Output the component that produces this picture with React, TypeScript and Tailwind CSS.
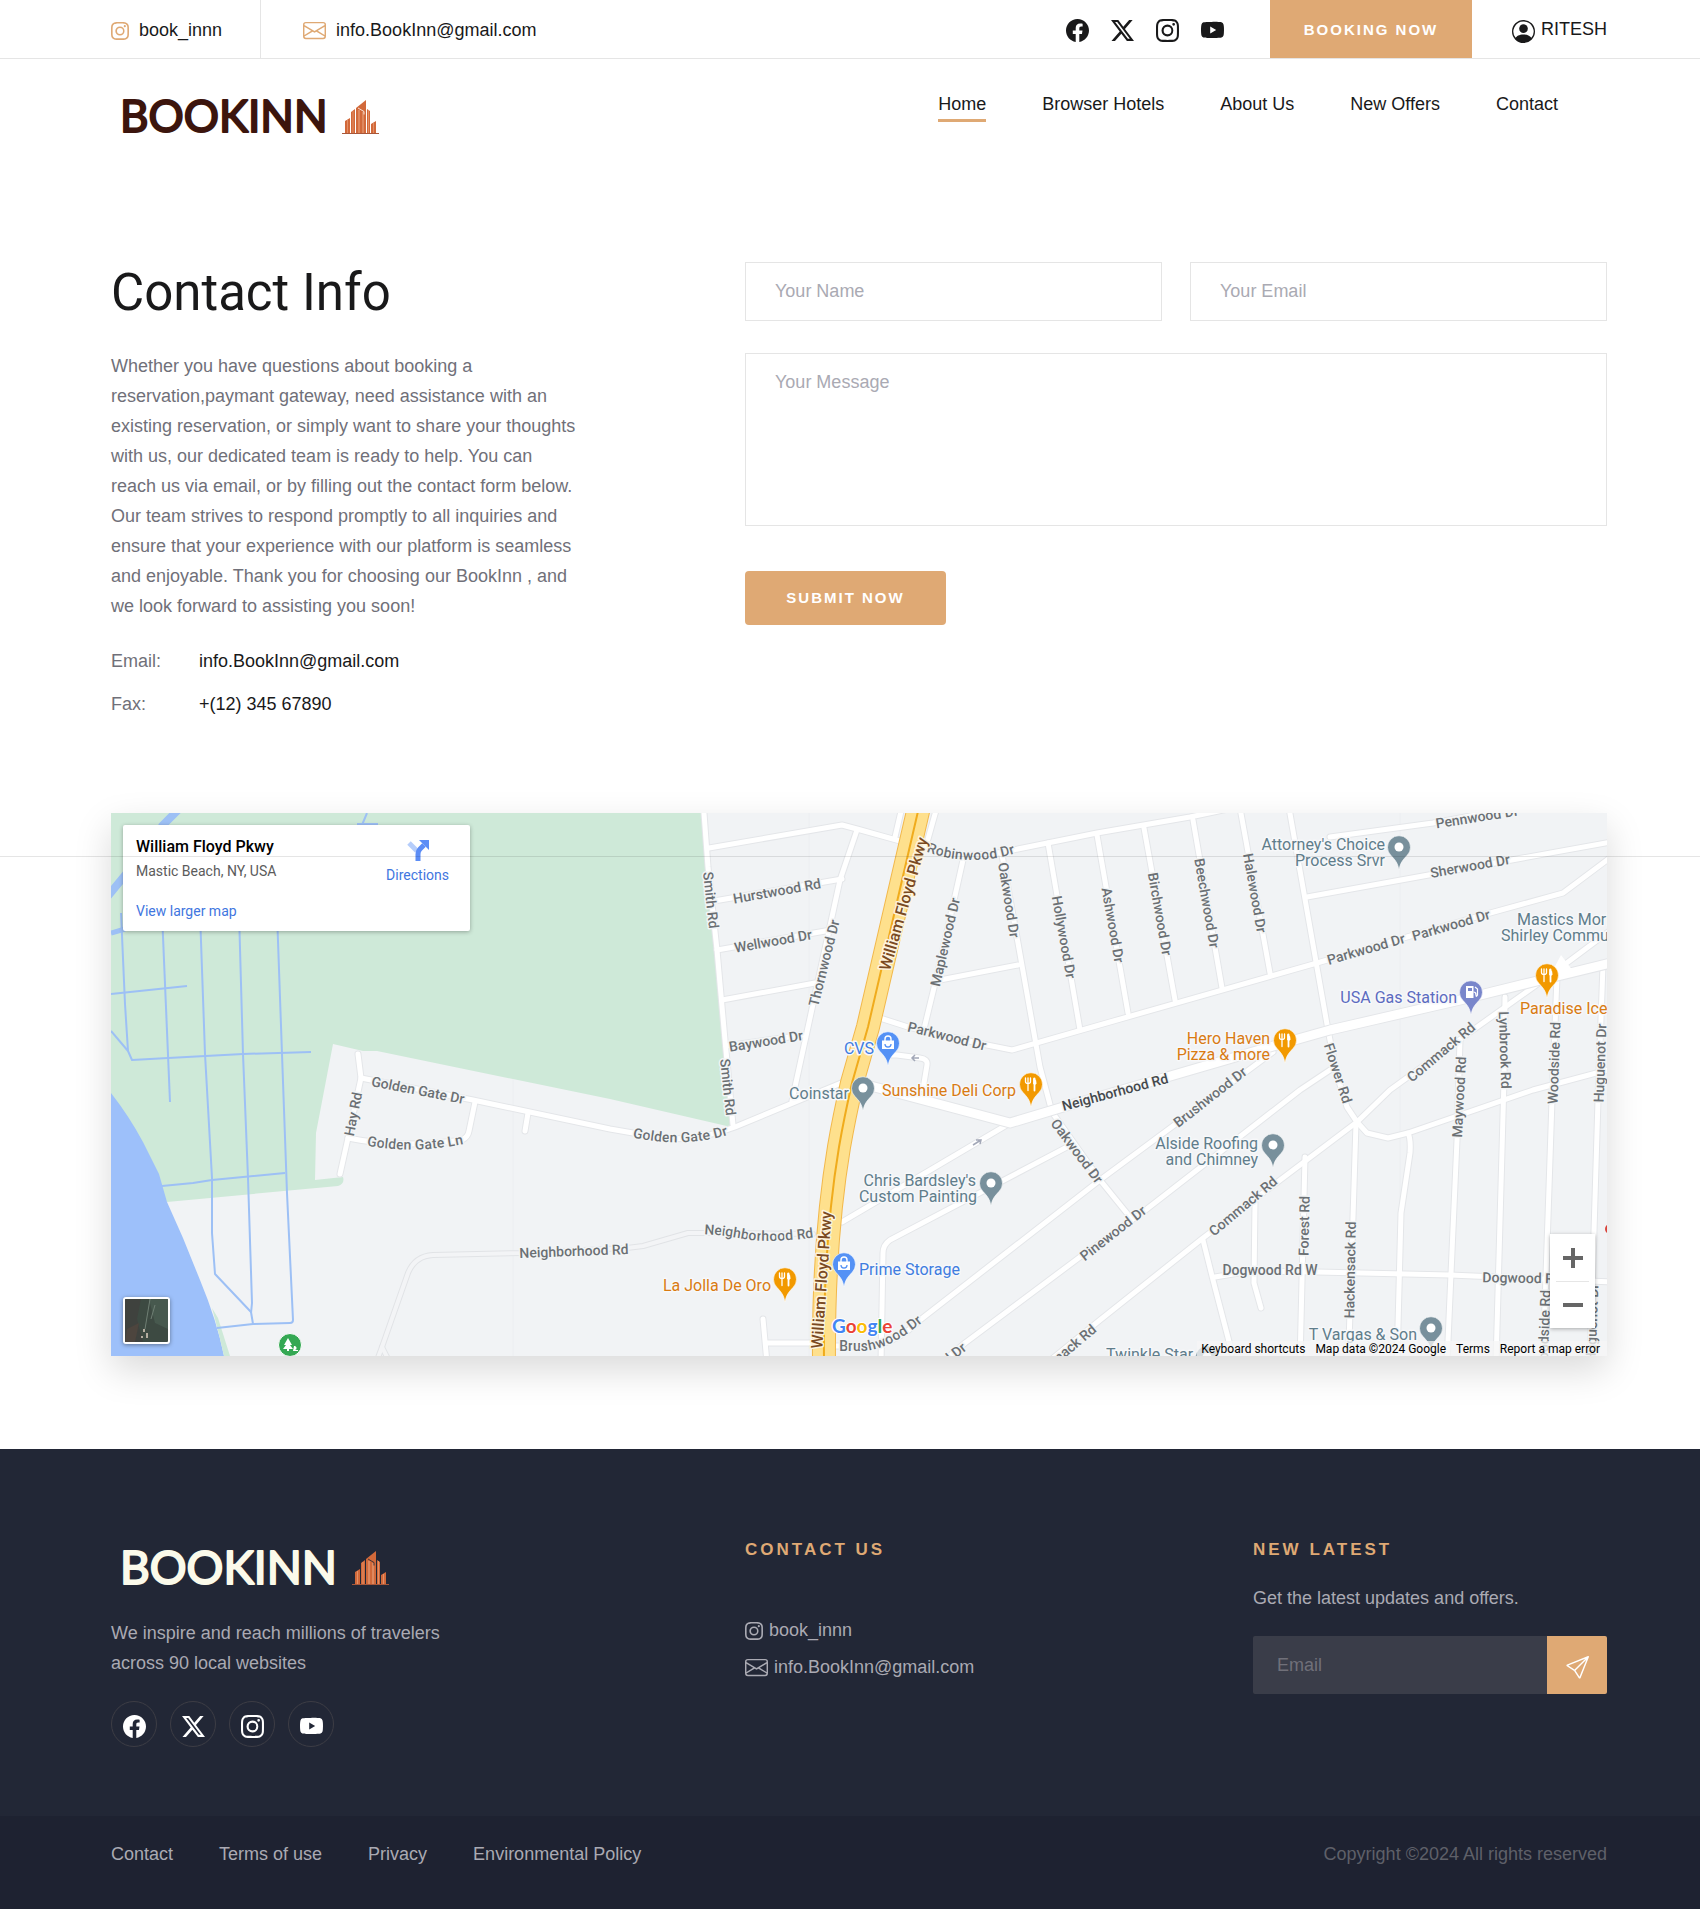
import type { ReactNode } from "react";
import {
  BsEnvelope,
  BsFacebook,
  BsInstagram,
  BsPersonCircle,
  BsSend,
  BsTwitterX,
  BsYoutube,
} from "react-icons/bs";

const socials = [
  { name: "Facebook", Icon: BsFacebook },
  { name: "X", Icon: BsTwitterX },
  { name: "Instagram", Icon: BsInstagram },
  { name: "YouTube", Icon: BsYoutube },
];

const navItems = ["Home", "Browser Hotels", "About Us", "New Offers", "Contact"];
const legalItems = ["Contact", "Terms of use", "Privacy", "Environmental Policy"];

function Buildings({ x, gap }: { x: number; gap: string }) {
  return (
    <g transform={`translate(${x} 1)`}>
      <path d="M3 33V21l5-3v15zM9 33V12l4-3v24zM14 33V8L24 0v33zM25 33V9l3 2v22zM29 33V24l5-3v12z" fill="#d2693a" />
      <path d="M5.500 20v13M11 11v22M26.500 10v23M31.500 23v10" stroke="#e79a72" strokeWidth="0.800" />
      <path d="M17 10v23M21 12v21" stroke="#eba882" strokeWidth="1" />
      <path d="M16 8l6 3.500v3M8.500 16v17M13.500 9v24M24.500 4v29M28.500 20v13" stroke={gap} strokeWidth="0.800" fill="none" />
      <path d="M0 33.500h37" stroke="#a8573a" strokeWidth="1.200" />
    </g>
  );
}

function Logo({ dark }: { dark?: boolean }) {
  const ink = dark ? "#fbfaea" : "#3c150d";
  return (
    <svg
      className={dark ? "block h-[58px] w-[272px]" : "block h-[56px] w-[262px]"}
      viewBox={dark ? "-2 -12 272 58" : "-2 -12 262 56"}
      role="img"
      aria-label="Bookinn"
    >
      <text
        x="-2"
        y={dark ? 34 : 33}
        fontFamily="Lato, sans-serif"
        fontSize={dark ? 46 : 44}
        fontWeight="400"
        fill={ink}
        stroke={ink}
        strokeWidth="2"
        strokeLinejoin="round"
      >
        BOOKINN
      </text>
      <Buildings x={dark ? 230 : 220} gap={dark ? "#222735" : "#ffffff"} />
    </svg>
  );
}

const canals = [
  "M10 100L14 191L17 238L21 247L57 245L132 241L200 239",
  "M0 218L17 238",
  "M51 100L59 289",
  "M0 181L76 173",
  "M89 100L94 241L101 365L101 420L104 461L140 499L142 511",
  "M128 100L132 241L137 365L141 490L140 500",
  "M166 100L171 241L176 380L182 507Q182 510 179 510L142 511L106 515",
  "M51 373L82 370L101 367L174 360",
  "M256 0L251 12M246 11H267",
];

const minorRoads = [
  "M247 241L250 265L237 325L229 361",
  "M250 265L362 287L499 316L522 320Q572 334 624 314L735 268",
  "M237 325Q290 336 351 327Q357 324 358 318L364 289",
  "M417 300L414 318",
  "M593 0L597 54L606 137L614 227L622 312",
  "M598 35L731 12L746 16L789 28",
  "M799 30L817 34Q856 48 902 37L986 20L1079 4L1122 -5",
  "M746 17L729 67L684 274L681 288",
  "M603 88L731 66",
  "M606 137L720 117",
  "M611 187L704 170",
  "M615 233L692 222",
  "M791 -6L784 24",
  "M826 -6L817 26",
  "M852 47L829 150L813 216",
  "M829 167L907 152",
  "M891 42L907 130L929 254L941 299L989 367L1019 404",
  "M937 30L969 217",
  "M986 22L1017 200",
  "M1033 15L1064 187",
  "M1082 7L1111 175",
  "M1129 -5L1159 160",
  "M1178 -5L1217 217L1226 262L1236 294L1246 309L1256 320L1277 325L1297 320L1422 277L1500 256",
  "M769 205L797 214L876 232L901 237L999 209L1206 150L1372 102L1452 80L1500 44",
  "M1219 24L1322 10L1402 -5",
  "M1196 84L1500 29",
  "M1500 117L1449 155L1362 217L1279 277L1246 309L1092 425L989 507L936 550",
  "M1162 239L1066 310L989 367L809 507Q786 530 760 533H722",
  "M1219 257L1189 277L1032 399L969 444L854 530L830 550",
  "M731 409L899 310",
  "M956 334L779 427Q772 432 772 440L770 550",
  "M652 506L656 550M656 530H702",
  "M778 242L786 242L809 245Q817 246 816 252L812 276",
  "M1092 427L1102 467L1121 540",
  "M1194 344L1189 550",
  "M1144 390L1143 470L1150 495",
  "M1245 310L1238 530",
  "M1297 320Q1300 326 1299 340L1290 400L1286 550",
  "M1349 227L1346 327L1336 550",
  "M1394 184L1393 267L1385 550",
  "M1446 164L1441 287L1432 550",
  "M1492 152L1487 287L1479 550",
  "M1104 464L1140 458L1206 459L1339 462L1500 469",
];

const mainRoads = ["M756 272L899 310L949 295L1056 264L1159 234L1219 217L1349 187L1422 169L1500 150"];
const trackRoads = ["M265 550L271 534L297 460Q304 443 322 442L409 440L516 435L532 433L577 420H620L702 421", "M271 534L279 550"];
const parkway = "M808 -6L757 214L741 270Q733 305 728 334Q712 430 713 550";

type RoadLabel = [x: number, y: number, angle: number, text: string];

const roadLabels: RoadLabel[] = [
  [666, 78, -10, "Hurstwood Rd"],
  [662, 128, -10, "Wellwood Dr"],
  [655, 228, -9, "Baywood Dr"],
  [600, 87, 84, "Smith Rd"],
  [617, 274, 84, "Smith Rd"],
  [713, 150, -76, "Thornwood Dr"],
  [834, 129, -77, "Maplewood Dr"],
  [898, 87, 81, "Oakwood Dr"],
  [953, 124, 80, "Hollywood Dr"],
  [1002, 112, 80, "Ashwood Dr"],
  [1049, 101, 80, "Birchwood Dr"],
  [1096, 90, 80, "Beechwood Dr"],
  [1144, 80, 80, "Halewood Dr"],
  [1366, 4, -9, "Pennwood Dr"],
  [1359, 53, -10, "Sherwood Dr"],
  [1255, 136, -16, "Parkwood Dr"],
  [1340, 112, -16, "Parkwood Dr"],
  [836, 223, 14, "Parkwood Dr"],
  [1227, 260, 72, "Flower Rd"],
  [1099, 284, -38, "Brushwood Dr"],
  [1330, 239, -40, "Commack Rd"],
  [1132, 393, -40, "Commack Rd"],
  [951, 541, -40, "Commack Rd"],
  [1002, 420, -38, "Pinewood Dr"],
  [822, 557, -38, "Pinewood Dr"],
  [966, 338, 53, "Oakwood Dr"],
  [1193, 413, -89, "Forest Rd"],
  [1239, 457, -89, "Hackensack Rd"],
  [1348, 284, -87, "Maywood Rd"],
  [1394, 237, 88, "Lynbrook Rd"],
  [1443, 250, -88, "Woodside Rd"],
  [1433, 518, -88, "Woodside Rd"],
  [1489, 250, -88, "Huguenot Dr"],
  [1481, 510, -88, "Huguenot Dr"],
  [1159, 457, 0, "Dogwood Rd W"],
  [1419, 465, 1, "Dogwood Rd W"],
  [307, 277, 11, "Golden Gate Dr"],
  [242, 301, -79, "Hay Rd"],
  [463, 438, -2, "Neighborhood Rd"],
];

const curvedLabels = [
  { id: "robinwood", d: "M812 32Q858 51 908 34", text: "Robinwood Dr" },
  { id: "golden-ln", d: "M252 327Q304 337 356 325", text: "Golden Gate Ln" },
  { id: "golden-dr", d: "M516 318Q574 332 622 315", text: "Golden Gate Dr" },
  { id: "neighborhood", d: "M584 416Q608 416 634 421T712 418", text: "Neighborhood Rd" },
  { id: "brushwood", d: "M724 533L754 533Q780 530 812 502", text: "Brushwood Dr" },
];

type PinKind = "dot" | "bag" | "food" | "gas";
const pinFill: Record<PinKind, string> = { dot: "#78909c", bag: "#5491f5", food: "#f29900", gas: "#7986cb" };

const pins: [x: number, y: number, kind: PinKind][] = [
  [777, 230, "bag"],
  [752, 275, "dot"],
  [920, 271, "food"],
  [880, 370, "dot"],
  [733, 451, "bag"],
  [674, 466, "food"],
  [1288, 34, "dot"],
  [1360, 179, "gas"],
  [1436, 162, "food"],
  [1174, 227, "food"],
  [1162, 332, "dot"],
  [1320, 515, "dot"],
  [1096, 544, "dot"],
];

const places: [x: number, y: number, anchor: "start" | "end", color: string, text: string][] = [
  [763, 236, "end", "#3f7de0", "CVS"],
  [738, 281, "end", "#607d8b", "Coinstar"],
  [905, 278, "end", "#d97b12", "Sunshine Deli Corp"],
  [865, 368, "end", "#607d8b", "Chris Bardsley's"],
  [866, 384, "end", "#607d8b", "Custom Painting"],
  [748, 457, "start", "#3f7de0", "Prime Storage"],
  [660, 473, "end", "#d97b12", "La Jolla De Oro"],
  [1274, 32, "end", "#607d8b", "Attorney's Choice"],
  [1274, 48, "end", "#607d8b", "Process Srvr"],
  [1346, 185, "end", "#5c6bc0", "USA Gas Station"],
  [1406, 107, "start", "#607d8b", "Mastics Moriches"],
  [1390, 123, "start", "#607d8b", "Shirley Community"],
  [1409, 196, "start", "#d97b12", "Paradise Ice"],
  [1159, 226, "end", "#d97b12", "Hero Haven"],
  [1159, 242, "end", "#d97b12", "Pizza & more"],
  [1147, 331, "end", "#607d8b", "Alside Roofing"],
  [1147, 347, "end", "#607d8b", "and Chimney"],
  [1306, 522, "end", "#607d8b", "T Vargas & Son"],
  [995, 542, "start", "#607d8b", "Twinkle Star"],
];

const pinGlyph: Record<PinKind, ReactNode> = {
  dot: <circle r="4.500" fill="#fff" />,
  bag: (
    <g>
      <path d="M-6-2.500H6V6H-6z" fill="#fff" />
      <path d="M-3-2V-4a3 3 0 0 1 6 0V-2" fill="none" stroke="#fff" strokeWidth="1.400" />
      <path d="M-3 1a3 3 0 0 0 6 0" fill="none" stroke="#5491f5" strokeWidth="1.300" />
    </g>
  ),
  food: (
    <g fill="none" stroke="#fff" strokeLinecap="round">
      <path d="M-5.500-6v3.500q0 2 2.500 2t2.500-2V-6M-3-6V6.500" strokeWidth="1.300" />
      <path d="M3.500-5.500v12" strokeWidth="1.800" />
      <path d="M3-5.500q2.500 1 2 5.500H3z" fill="#fff" strokeWidth="1" />
    </g>
  ),
  gas: (
    <g>
      <path d="M-5-6H2.500V6H-5z" fill="#fff" />
      <path d="M-3-4H1v3H-3z" fill="#7986cb" />
      <path d="M2.500 0Q5 0 5 3t1.500 0V-3L4-5" fill="none" stroke="#fff" strokeWidth="1.200" />
    </g>
  ),
};

function Roads({ paths, width, casing, fill }: { paths: string[]; width: number; casing: string; fill: string }) {
  return (
    <g fill="none" strokeLinecap="round" strokeLinejoin="round">
      {paths.map((d) => (
        <path key={`c${d}`} d={d} stroke={casing} strokeWidth={width + 2} />
      ))}
      {paths.map((d) => (
        <path key={`f${d}`} d={d} stroke={fill} strokeWidth={width} />
      ))}
    </g>
  );
}

function StreetMap() {
  return (
    <svg className="block h-[543px] w-full" fontFamily="Roboto, sans-serif" role="img" aria-label="Map of William Floyd Pkwy">
      <rect width="100%" height="100%" fill="#f1f3f5" />
      <path
        d="M0 0H591L597 54L606 137L614 227L620 314L499 286L402 266L266 238H252L222 231L205 320L204 367L232 364Q234 371 227 373L56 389L0 290Z"
        fill="#cee9d8"
      />
      <path d="M0 280Q18 303 32 329L48 361L56 389L72 425L89 467Q106 508 113 543H0Z" fill="#9dc0fa" />
      <path d="M101 495L107 505L119 543H113Q108 520 101 495" fill="#cee9d8" />
      <g fill="none" stroke="#9dc0f5" strokeWidth="2" strokeLinejoin="round">
        {canals.map((d) => (
          <path key={d} d={d} />
        ))}
        <path d="M50 14L68 -4M-3 83L20 55" strokeWidth="8" />
        <path d="M0 120L14 116" strokeWidth="5" />
      </g>
      <path d="M402 266V543M698 0V543M1289 0V543" stroke="#e9ecef" strokeOpacity="0.600" />

      <Roads paths={trackRoads} width={4} casing="#e1e3e6" fill="#f3f4f6" />
      <Roads paths={minorRoads} width={5} casing="#e4e6e9" fill="#ffffff" />
      <Roads paths={mainRoads} width={9} casing="#e4e6e9" fill="#ffffff" />
      <path d="M1440 161L1450 142L1462 158Z" fill="#fff" />
      <path d={parkway} fill="none" stroke="#f2b84b" strokeWidth="24" />
      <path d={parkway} fill="none" stroke="#fee08d" strokeWidth="22" />
      <path d={parkway} fill="none" stroke="#f0ab1c" strokeWidth="2" />
      <path d="M808 245h-7m3-3l-3 3l3 3M862 332l8-5m-5 0h5l-1 4" stroke="#a3a8b8" strokeWidth="1.500" fill="none" />

      <g
        fontSize="14"
        fontWeight="500"
        fill="#6b7074"
        stroke="#f3f5f6"
        strokeWidth="3"
        strokeLinejoin="round"
        textAnchor="middle"
        style={{ paintOrder: "stroke" }}
      >
        {roadLabels.map(([x, y, angle, text]) => (
          <text key={`${text}${x}`} transform={`translate(${x} ${y}) rotate(${angle})`} dy="5">
            {text}
          </text>
        ))}
        {curvedLabels.map(({ id, d, text }) => (
          <g key={id}>
            <path id={id} d={d} fill="none" stroke="none" />
            <text dy="5">
              <textPath href={`#${id}`} startOffset="50%">
                {text}
              </textPath>
            </text>
          </g>
        ))}
        <text transform="translate(1004 279) rotate(-15)" dy="5" fill="#45494d">
          Neighborhood Rd
        </text>
        <g fontSize="16" fill="#7a4a22" stroke="#fdf3dc">
          <text transform="translate(793 91) rotate(-74)" dy="5">
            William Floyd Pkwy
          </text>
          <text transform="translate(711 467) rotate(-86)" dy="5">
            William Floyd Pkwy
          </text>
        </g>
      </g>

      <g fontSize="16" stroke="#f7f8fa" strokeWidth="3" strokeLinejoin="round" style={{ paintOrder: "stroke" }}>
        {places.map(([x, y, anchor, color, text]) => (
          <text key={text} x={x} y={y} dy="5" textAnchor={anchor} fill={color}>
            {text}
          </text>
        ))}
      </g>
      {pins.map(([x, y, kind]) => (
        <g key={`${x}-${y}`} transform={`translate(${x} ${y})`}>
          <path
            d="M0 23C-1.500 15-4 13-8 8.500A11.500 11.500 0 1 1 8 8.500C4 13 1.500 15 0 23Z"
            fill={pinFill[kind]}
            stroke="#fff"
            strokeWidth="0.600"
          />
          {pinGlyph[kind]}
        </g>
      ))}
      <g transform="translate(179 532)">
        <circle r="11.500" fill="#34a853" stroke="#fff" />
        <path d="M-2-7L2 0H0L3 4H-1V6H-3V4H-7L-4 0H-6ZM4 1a2 2 0 0 1 1 4H8V6H3Z" fill="#fff" />
      </g>
      <circle cx="1499" cy="416" r="5" fill="#d9443c" />
      <text
        x="721"
        y="520"
        fontFamily="Lato, sans-serif"
        fontSize="19"
        fontWeight="700"
        stroke="#fff"
        strokeWidth="2"
        strokeLinejoin="round"
        style={{ paintOrder: "stroke" }}
      >
        <tspan fill="#4285f4">G</tspan>
        <tspan fill="#ea4335">o</tspan>
        <tspan fill="#fbbc05">o</tspan>
        <tspan fill="#4285f4">g</tspan>
        <tspan fill="#34a853">l</tspan>
        <tspan fill="#ea4335">e</tspan>
      </text>
    </svg>
  );
}

function MapPanel() {
  return (
    <div className="relative overflow-hidden font-[Roboto,sans-serif] shadow-[0_14px_35px_rgba(0,0,0,0.15)]">
      <StreetMap />
      <div className="absolute top-3 left-3 flex h-[106px] w-[347px] justify-between rounded-xs bg-white pt-3 pr-[21px] pl-[13px] shadow-[0_1px_4px_rgba(0,0,0,0.3)]">
        <div className="flex flex-col">
          <strong className="text-base leading-5 font-medium text-black">William Floyd Pkwy</strong>
          <span className="mt-[6px] text-sm leading-4 text-[#5b5b5b]">Mastic Beach, NY, USA</span>
          <a href="#map" className="mt-6 text-sm leading-4 text-[#3f76e0]">
            View larger map
          </a>
        </div>
        <a href="#directions" className="flex flex-col items-center text-sm leading-4 text-[#3f76e0]">
          <svg className="mt-[2px] mb-[6px] h-[22px] w-[24px]" viewBox="0 0 24 22" aria-hidden="true">
            <path d="M3 4L11 12" stroke="#b5cdfb" strokeWidth="5" fill="none" />
            <path d="M12 22V15Q12 12 14 10L18 6" stroke="#5c8df6" strokeWidth="5" fill="none" />
            <path d="M13 1H23V11Z" fill="#5c8df6" />
          </svg>
          Directions
        </a>
      </div>
      <button
        type="button"
        aria-label="Show satellite imagery"
        className="absolute bottom-3 left-3 size-[47px] overflow-hidden rounded-[3px] border-2 border-white bg-[#3d4a42] shadow-[0_1px_4px_rgba(0,0,0,0.4)]"
      >
        <svg className="block size-full" viewBox="0 0 43 43" aria-hidden="true">
          <path d="M0 0H16L12 20L18 43H0Z" fill="#3f423e" />
          <path d="M24 0H43V30L30 24Z" fill="#47594e" />
          <path d="M2 30L14 24L10 43H0Z" fill="#4d453e" />
          <path d="M25 0L22 18L20 30M30 6L26 20" stroke="#6f7f74" fill="none" />
          <path d="M18 30h2v3h-2zM21 34h2v5h-2zM16 37h2v2h-2z" fill="#b5ada0" />
        </svg>
      </button>
      <div className="absolute right-3 bottom-7 flex w-[45px] flex-col bg-white shadow-[0_1px_4px_rgba(0,0,0,0.3)]">
        <button type="button" aria-label="Zoom in" className="flex h-[47px] items-center justify-center">
          <svg className="size-5" viewBox="0 0 20 20" aria-hidden="true">
            <path d="M0 10H20M10 0V20" stroke="#666" strokeWidth="4" />
          </svg>
        </button>
        <hr className="mx-[6px] border-[#e6e6e6]" />
        <button type="button" aria-label="Zoom out" className="flex h-[46px] items-center justify-center">
          <svg className="size-5" viewBox="0 0 20 20" aria-hidden="true">
            <path d="M0 10H20" stroke="#666" strokeWidth="4" />
          </svg>
        </button>
      </div>
      <div className="absolute right-0 bottom-0 flex h-[15px] items-center gap-[10px] bg-[#f5f5f5]/75 pr-[7px] pl-1 text-xs leading-4 text-black">
        <button type="button">Keyboard shortcuts</button>
        <span>Map data ©2024 Google</span>
        <a href="#terms">Terms</a>
        <a href="#report">Report a map error</a>
      </div>
    </div>
  );
}

function TopBar() {
  return (
    <div className="flex items-stretch justify-between border-b border-[#e5e5e5] pr-[93px] pl-[111px] leading-[27px]">
      <div className="flex">
        <a href="#instagram" className="flex h-[58px] items-center gap-[10px] border-r border-[#e5e5e5] pt-[3px] pr-[38px]">
          <BsInstagram className="size-[18px] text-[#dfa974]" />
          book_innn
        </a>
        <a href="mailto:info.BookInn@gmail.com" className="flex items-center gap-[10px] pt-[3px] pl-[42px]">
          <BsEnvelope className="size-[23px] text-[#dfa974]" />
          info.BookInn@gmail.com
        </a>
      </div>
      <div className="flex">
        <div className="flex items-center gap-[22px] pt-[3px] pr-[46px]">
          {socials.map(({ name, Icon }) => (
            <a key={name} href={`#${name}`} aria-label={name}>
              <Icon className="size-[23px] text-[#19191a]" />
            </a>
          ))}
        </div>
        <button type="button" className="w-[202px] bg-[#dfa974] text-[15px] font-bold tracking-[2px] text-white">
          BOOKING NOW
        </button>
        <a href="#account" className="flex items-center gap-[6px] pl-10">
          <BsPersonCircle className="mt-1 size-[23px]" />
          RITESH
        </a>
      </div>
    </div>
  );
}

export default function App() {
  return (
    <div className="min-w-[1200px] bg-white font-['Liberation_Sans',Arial,sans-serif] text-lg text-[#19191a]">
      <header>
        <TopBar />
        <div className="flex items-start justify-between pt-8 pr-[142px] pl-[120px]">
          <a href="#home" className="-mt-1">
            <Logo />
          </a>
          <nav className="flex gap-14 leading-[27px]">
            {navItems.map((item) => (
              <a
                key={item}
                href={`#${item}`}
                className={item === "Home" ? "border-b-3 border-[#dfa974] pb-px" : "border-b-3 border-transparent pb-px"}
              >
                {item}
              </a>
            ))}
          </nav>
        </div>
      </header>

      <main className="relative pt-[119px] pr-[93px] pb-[93px] pl-[111px]">
        <section className="grid grid-cols-[634fr_862fr]">
          <div>
            <h1 className="font-[Roboto,sans-serif] text-[51px] leading-[62px]">Contact Info</h1>
            <p className="mt-[27px] max-w-[470px] leading-[30px] text-[#707079]">
              Whether you have questions about booking a reservation,paymant gateway, need assistance with an existing
              reservation, or simply want to share your thoughts with us, our dedicated team is ready to help. You can
              reach us via email, or by filling out the contact form below. Our team strives to respond promptly to all
              inquiries and ensure that your experience with our platform is seamless and enjoyable. Thank you for
              choosing our BookInn , and we look forward to assisting you soon!
            </p>
            <table className="mt-[18px]">
              <tbody>
                <tr className="h-[43px]">
                  <th scope="row" className="w-[88px] text-left font-normal text-[#707079]">
                    Email:
                  </th>
                  <td>info.BookInn@gmail.com</td>
                </tr>
                <tr className="h-[43px]">
                  <th scope="row" className="text-left font-normal text-[#707079]">
                    Fax:
                  </th>
                  <td>+(12) 345 67890</td>
                </tr>
              </tbody>
            </table>
          </div>
          <form className="grid grid-cols-2 content-start items-start gap-x-7">
            <input
              type="text"
              aria-label="Your Name"
              placeholder="Your Name"
              className="h-[59px] w-full border border-[#e5e5e5] px-[29px] placeholder:text-[#aaaab3]"
            />
            <input
              type="email"
              aria-label="Your Email"
              placeholder="Your Email"
              className="h-[59px] w-full border border-[#e5e5e5] px-[29px] placeholder:text-[#aaaab3]"
            />
            <textarea
              aria-label="Your Message"
              placeholder="Your Message"
              className="col-span-2 mt-8 h-[173px] w-full resize-none border border-[#e5e5e5] px-[29px] py-[14px] placeholder:text-[#aaaab3]"
            />
            <button
              type="submit"
              className="mt-[45px] h-[54px] w-[201px] rounded bg-[#dfa974] text-[15px] font-bold tracking-[2px] text-white"
            >
              SUBMIT NOW
            </button>
          </form>
        </section>
        <section id="map" className="mt-[88px]">
          <MapPanel />
        </section>
        <div className="pointer-events-none absolute inset-x-0 bottom-[592px] h-px bg-black/10" />
      </main>

      <footer className="bg-[#222736] text-[#aaaab3]">
        <div className="grid grid-cols-[634fr_508fr_354fr] pt-[90px] pr-[93px] pb-[69px] pl-[111px]">
          <div>
            <div className="-mt-px pl-[9px]">
              <Logo dark />
            </div>
            <p className="mt-[22px] max-w-[360px] leading-[30px]">
              We inspire and reach millions of travelers across 90 local websites
            </p>
            <div className="mt-[23px] flex gap-[13px]">
              {socials.map(({ name, Icon }) => (
                <a
                  key={name}
                  href={`#${name}`}
                  aria-label={name}
                  className="flex size-[46px] items-center justify-center rounded-full border border-[#3d3d45] pt-1 text-white"
                >
                  <Icon className="size-[23px]" />
                </a>
              ))}
            </div>
          </div>
          <div>
            <h2 className="text-[17px] leading-[22px] font-bold tracking-[3px] text-[#dfa974]">CONTACT US</h2>
            <ul className="mt-[51px] leading-[37px]">
              <li>
                <a href="#instagram" className="flex items-center gap-[6px]">
                  <BsInstagram className="size-[18px]" />
                  book_innn
                </a>
              </li>
              <li>
                <a href="mailto:info.BookInn@gmail.com" className="flex items-center gap-[6px]">
                  <BsEnvelope className="size-[23px]" />
                  info.BookInn@gmail.com
                </a>
              </li>
            </ul>
          </div>
          <div>
            <h2 className="text-[17px] leading-[22px] font-bold tracking-[3px] text-[#dfa974]">NEW LATEST</h2>
            <p className="mt-[22px] leading-[30px]">Get the latest updates and offers.</p>
            <form className="mt-[23px] flex h-[58px]">
              <input
                type="email"
                aria-label="Email"
                placeholder="Email"
                className="min-w-0 flex-1 rounded-l-xs bg-[#3a3d49] px-[24px] placeholder:text-[#707079]"
              />
              <button
                type="submit"
                aria-label="Subscribe"
                className="flex w-[60px] items-center justify-center rounded-r-xs bg-[#dfa974] text-white"
              >
                <BsSend className="mt-1 size-[23px]" />
              </button>
            </form>
          </div>
        </div>
        <div className="flex justify-between bg-[#1e2231] pt-[23px] pr-[93px] pb-10 pl-[111px] leading-[30px]">
          <nav className="flex gap-[46px]">
            {legalItems.map((item) => (
              <a key={item} href={`#${item}`}>
                {item}
              </a>
            ))}
          </nav>
          <p className="text-[#5e6069]">Copyright ©2024 All rights reserved</p>
        </div>
      </footer>
    </div>
  );
}
